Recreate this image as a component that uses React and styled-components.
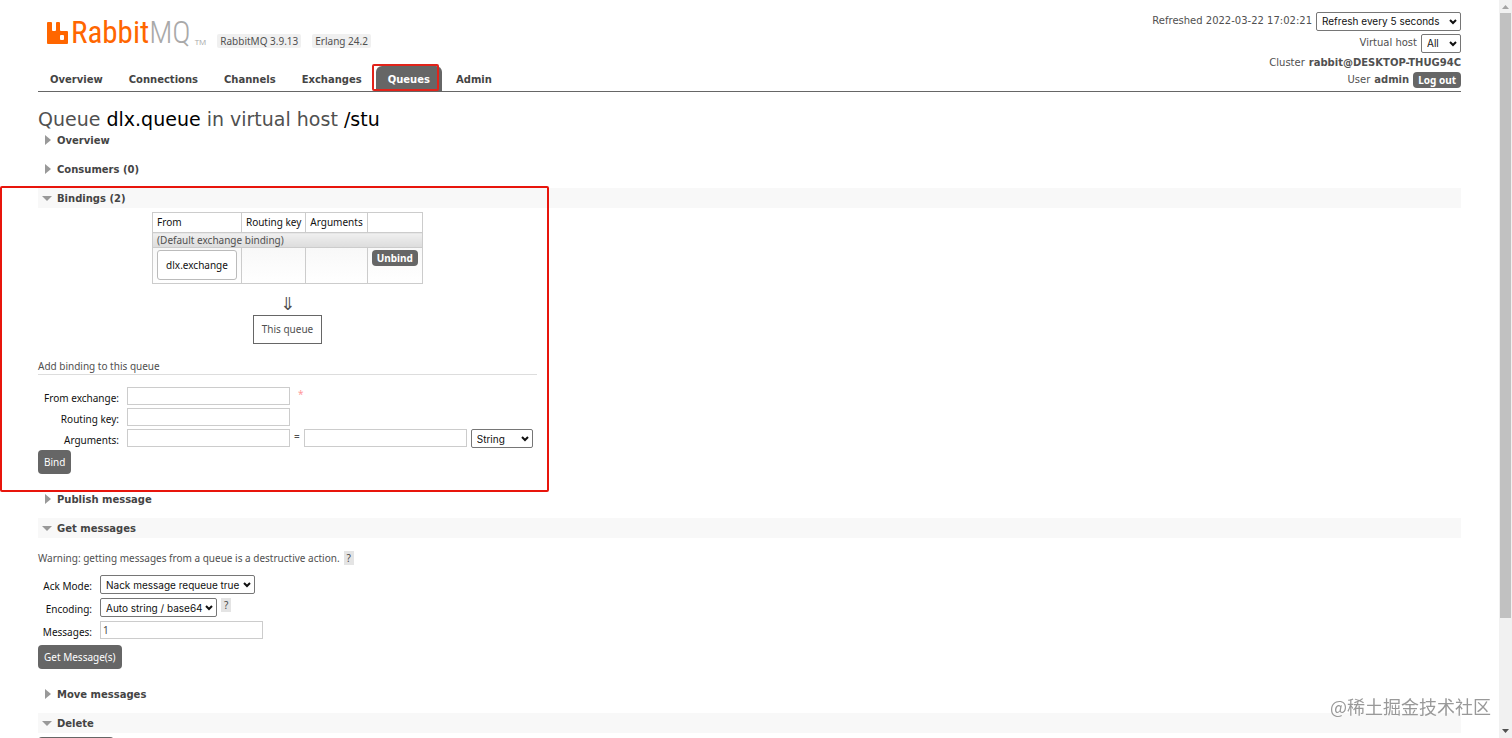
import React from 'react';
import styled, { createGlobalStyle, css } from 'styled-components';

const wideFont = '"DejaVu Sans", Verdana, sans-serif';

const GlobalStyle = createGlobalStyle`
  * {
    box-sizing: border-box;
  }

  body {
    margin: 0;
    background: #fff;
    color: #505050;
    font: 10px/14px "Noto Sans", Verdana, sans-serif;
  }

  button, input {
    font-family: inherit;
  }
`;

const Page = styled.div`
  display: flex;
  height: 100vh;
  overflow: hidden;
`;

const Main = styled.div`
  flex: 1;
  min-width: 0;
  padding: 0 38px;
`;

/* Header */

const Header = styled.header`
  display: flex;
  justify-content: space-between;
  height: 92px;
  border-bottom: 1px solid #666;
`;

const Left = styled.div`
  display: flex;
  flex-direction: column;
  justify-content: space-between;
`;

const Brand = styled.div`
  display: flex;
  align-items: flex-end;
  gap: 9px;
  padding: 16px 0 0 9px;
`;

const Logo = styled.a`
  display: flex;
  align-items: flex-end;
  color: #f60;
  font: 31px/34px "Roboto Condensed", Roboto, sans-serif;
  text-decoration: none;

  svg {
    margin: 0 2px 6px 0;
  }
`;

const LogoGrey = styled.span`
  color: #a9a9a9;
  font-weight: 300;
`;

const Trademark = styled.span`
  margin-left: 4px;
  color: #a9a9a9;
  font: 8px/16px "Open Sans", sans-serif;
`;

const Version = styled.span`
  padding: 0 3px;
  margin: 0 0 2px 2px;
  border-radius: 2px;
  background: #f0f0f0;
`;

const Tabs = styled.nav`
  display: flex;
  gap: 2px;
`;

const Tab = styled.a`
  position: relative;
  padding: 7px 12px 5px;
  border-radius: 6px 6px 0 0;
  color: #444;
  font: bold 10px/13px ${wideFont};
  text-decoration: none;

  ${({ $active }) => $active && css`
    background: #666;
    color: #fff;
  `}
`;

const Status = styled.div`
  display: flex;
  flex-direction: column;
  align-items: flex-end;
  padding-top: 10px;
  font-family: ${wideFont};
`;

const StatusRow = styled.div`
  display: flex;
  align-items: center;
  gap: 4px;
  height: ${({ $tall }) => ($tall ? '22px' : '17px')};
`;

/* Outlines drawn over the page by hand */

const TabMark = styled.span`
  position: absolute;
  inset: -2px 3px 0 -4px;
  border: 2px solid #e2231a;
  border-radius: 2px;
`;

const SectionMark = styled.span`
  position: absolute;
  top: -2px;
  bottom: -12px;
  left: -38px;
  width: 549px;
  border: 2px solid #e8150c;
  border-radius: 2px;
  pointer-events: none;
`;

/* Controls */

const SelectBox = styled.span`
  position: relative;
  display: inline-flex;
  width: ${({ $width }) => $width};

  svg {
    position: absolute;
    top: 7px;
    right: 4px;
    pointer-events: none;
  }
`;

const NativeSelect = styled.select`
  appearance: none;
  width: 100%;
  height: 19px;
  padding: 0 5px;
  border: 1px solid #767676;
  border-radius: 2px;
  background: #fff;
  color: #111;
  font: 10px Inter, Arial, sans-serif;
`;

const Input = styled.input`
  width: 163px;
  height: 18px;
  padding: 2px;
  border: 1px solid #ccc;
  background: #fff;
  color: #484848;
  font-size: 10px;
`;

const Button = styled.button`
  padding: 5px 6px;
  border: 0;
  border-radius: 4px;
  background: #666;
  color: #fff;
  font-size: 10px;
  line-height: 14px;
`;

const SmallButton = styled(Button)`
  padding: 1px 5px;
  font-family: "Noto Sans", Verdana, sans-serif;
  font-weight: bold;
`;

const Help = styled.button`
  padding: 0 3px;
  border: 0;
  background: #e4e4e4;
  color: #484848;
  font-size: 10px;
  line-height: 14px;
`;

/* Sections */

const Title = styled.h1`
  margin: 16px 0 0;
  font: 19px/22px ${wideFont};

  b {
    color: #000;
    font-weight: normal;
  }
`;

const SectionBox = styled.section`
  position: relative;
  margin-bottom: 9px;
`;

const SectionHead = styled.h2`
  display: flex;
  align-items: center;
  margin: 0;
  padding-left: 4px;
  height: 20px;
  background: ${({ $open }) => ($open ? '#f8f8f8' : 'transparent')};
  font-size: 10px;
`;

const Toggle = styled.button`
  display: flex;
  align-items: center;
  gap: 5px;
  padding: 0;
  border: 0;
  background: none;
  color: #444;
  font: bold 10px/14px ${wideFont};

  span {
    padding-top: 1px;
  }
`;

const Body = styled.div`
  width: 499px;
  padding: ${({ $padding }) => $padding};
`;

const Diagram = styled.div`
  display: flex;
  flex-direction: column;
  align-items: center;
`;

const BindingTable = styled.table`
  border-collapse: collapse;

  th, td {
    padding: 2px 4px;
    border: 1px solid #ccc;
    text-align: left;
    vertical-align: top;
  }

  th {
    height: 20px;
    color: #111;
    font-weight: normal;
    line-height: 15px;
  }
`;

const DefaultRow = styled.tr`
  && td {
    padding: 0 4px;
    background: linear-gradient(#f0f0f0, #dcdcdc);
  }
`;

const ExchangeRow = styled.tr`
  height: 36px;
  background: linear-gradient(#f8f8f8, #fff);
`;

const Exchange = styled.a`
  display: block;
  padding: 7px 8px;
  border: 1px solid #bbb;
  border-radius: 3px;
  background: #fff;
  color: #111;
  text-decoration: none;
`;

const Arrow = styled.span`
  margin: 10px 0 1px;
  font: 18px/20px "DejaVu Sans", sans-serif;
`;

const ThisQueue = styled.span`
  padding: 7px 8px;
  border: 1px solid #666;
  line-height: 13px;
`;

const FormTitle = styled.h3`
  margin: 15px 0 12px;
  border-bottom: 1px solid #ddd;
  font-size: 10px;
  font-weight: normal;
  line-height: 15px;
`;

const Form = styled.form`
  display: grid;
  grid-template-columns: ${({ $labels }) => $labels} auto;
  column-gap: 8px;
  grid-auto-rows: ${({ $row }) => $row};
  margin: 0;
`;

const Label = styled.label`
  padding-top: 4px;
  color: #111;
  text-align: right;
`;

const Field = styled.div`
  display: flex;
  align-items: flex-start;
  gap: 4px;
`;

const Required = styled.span`
  margin-left: 4px;
  color: #f99;
`;

const Actions = styled.div`
  display: flex;
  margin-top: ${({ $top }) => $top || '0'};
  align-items: flex-start;
`;

const Warning = styled.p`
  display: flex;
  gap: 4px;
  margin: 0 0 10px;
`;

/* Window scrollbar and watermark */

const Scrollbar = styled.div`
  display: flex;
  flex-direction: column;
  align-items: center;
  width: 13px;
  background: #f1f1f1;

  svg {
    flex: none;
    margin: 4px 0;
  }
`;

const Track = styled.div`
  flex: 1;
  width: 11px;
`;

const Thumb = styled.div`
  height: 85%;
  background: #c1c1c1;
`;

const Watermark = styled.span`
  position: fixed;
  right: 21px;
  bottom: 20px;
  color: #999;
  font: 18px/24px "Noto Sans CJK SC", sans-serif;
`;

const Select = ({ width, children, ...rest }) => (
  <SelectBox $width={width}>
    <NativeSelect {...rest}>
      <option>{children}</option>
    </NativeSelect>
    <svg width="8" height="6" viewBox="0 0 8 6" fill="none" stroke="#111" strokeWidth="2">
      <path d="M1 1l3 3 3-3" />
    </svg>
  </SelectBox>
);

const Section = ({ title, open, marked, children }) => (
  <SectionBox>
    <SectionHead $open={open}>
      <Toggle type="button" aria-expanded={!!open}>
        <svg width="10" height="10" viewBox="0 0 10 10" fill="#999">
          <path d={open ? 'M0 3h10L5 8z' : 'M3 0l6 5-6 5z'} />
        </svg>
        <span>{title}</span>
      </Toggle>
    </SectionHead>
    {children}
    {marked && <SectionMark />}
  </SectionBox>
);

const tabs = ['Overview', 'Connections', 'Channels', 'Exchanges', 'Queues', 'Admin'];

const App = () => (
  <Page>
    <GlobalStyle />
    <Main>
      <Header>
        <Left>
          <Brand>
            <Logo href="#/">
              <svg width="22" height="22" viewBox="0 0 22 22" fill="#f60">
                <path fillRule="evenodd" d="M1 0h3q1 0 1 1v7q0 1 1 1h2q1 0 1-1V1q0-1 1-1h2q1 0 1 1v7q0 1 1 1h6q1 0 1 1v11q0 1-1 1H1q-1 0-1-1V1q0-1 1-1zM13 14v3q0 1 1 1h2q1 0 1-1v-3q0-1-1-1h-2q-1 0-1 1z" />
              </svg>
              <span>Rabbit<LogoGrey>MQ</LogoGrey></span>
              <Trademark>TM</Trademark>
            </Logo>
            <Version>RabbitMQ 3.9.13</Version>
            <Version>Erlang 24.2</Version>
          </Brand>
          <Tabs>
            {tabs.map((name) => (
              <Tab key={name} href={`#/${name.toLowerCase()}`} $active={name === 'Queues'}>
                {name}
                {name === 'Queues' && <TabMark />}
              </Tab>
            ))}
          </Tabs>
        </Left>
        <Status>
          <StatusRow $tall>
            <label htmlFor="refresh">Refreshed 2022-03-22 17:02:21</label>
            <Select id="refresh" width="145px">Refresh every 5 seconds</Select>
          </StatusRow>
          <StatusRow $tall>
            <label htmlFor="vhost">Virtual host</label>
            <Select id="vhost" width="40px">All</Select>
          </StatusRow>
          <StatusRow>
            Cluster <b>rabbit@DESKTOP-THUG94C</b>
          </StatusRow>
          <StatusRow>
            User <b>admin</b> <SmallButton type="button">Log out</SmallButton>
          </StatusRow>
        </Status>
      </Header>

      <Title>Queue <b>dlx.queue</b> in virtual host <b>/stu</b></Title>

      <Section title="Overview" />
      <Section title="Consumers (0)" />

      <Section title="Bindings (2)" open marked>
        <Body $padding="4px 0 6px">
          <Diagram>
            <BindingTable>
              <thead>
                <tr>
                  <th>From</th>
                  <th>Routing key</th>
                  <th>Arguments</th>
                  <th aria-label="Actions" />
                </tr>
              </thead>
              <tbody>
                <DefaultRow>
                  <td colSpan="4">(Default exchange binding)</td>
                </DefaultRow>
                <ExchangeRow>
                  <td><Exchange href="#/exchanges/dlx.exchange">dlx.exchange</Exchange></td>
                  <td />
                  <td />
                  <td><SmallButton type="button">Unbind</SmallButton></td>
                </ExchangeRow>
              </tbody>
            </BindingTable>
            <Arrow>⇓</Arrow>
            <ThisQueue>This queue</ThisQueue>
          </Diagram>
          <FormTitle>Add binding to this queue</FormTitle>
          <Form $labels="81px" $row="21px">
            <Label htmlFor="source">From exchange:</Label>
            <Field>
              <Input id="source" />
              <Required>*</Required>
            </Field>
            <Label htmlFor="routing">Routing key:</Label>
            <Field><Input id="routing" /></Field>
            <Label htmlFor="argument">Arguments:</Label>
            <Field>
              <Input id="argument" />
              =
              <Input aria-label="Argument value" />
              <Select aria-label="Argument type" width="62px">String</Select>
            </Field>
          </Form>
          <Actions>
            <Button type="button">Bind</Button>
          </Actions>
        </Body>
      </Section>

      <Section title="Publish message" />

      <Section title="Get messages" open>
        <Body $padding="13px 0 6px">
          <Warning>
            Warning: getting messages from a queue is a destructive action.
            <Help type="button">?</Help>
          </Warning>
          <Form $labels="54px" $row="23px">
            <Label htmlFor="ack">Ack Mode:</Label>
            <Field>
              <Select id="ack" width="155px">Nack message requeue true</Select>
            </Field>
            <Label htmlFor="encoding">Encoding:</Label>
            <Field>
              <Select id="encoding" width="117px">Auto string / base64</Select>
              <Help type="button">?</Help>
            </Field>
            <Label htmlFor="count">Messages:</Label>
            <Field><Input id="count" defaultValue="1" /></Field>
          </Form>
          <Actions $top="1px">
            <Button type="button">Get Message(s)</Button>
          </Actions>
        </Body>
      </Section>

      <Section title="Move messages" />

      <Section title="Delete" open>
        <Body $padding="4px 0">
          <Button type="button">Delete Queue</Button>
        </Body>
      </Section>
    </Main>

    <Scrollbar>
      <svg width="7" height="5" viewBox="0 0 7 5" fill="#a3a3a3"><path d="M0 5l3.500-4L7 5z" /></svg>
      <Track><Thumb /></Track>
      <svg width="7" height="5" viewBox="0 0 7 5" fill="#505050"><path d="M0 0h7L3.500 4z" /></svg>
    </Scrollbar>
    <Watermark>@稀土掘金技术社区</Watermark>
  </Page>
);

export default App;
